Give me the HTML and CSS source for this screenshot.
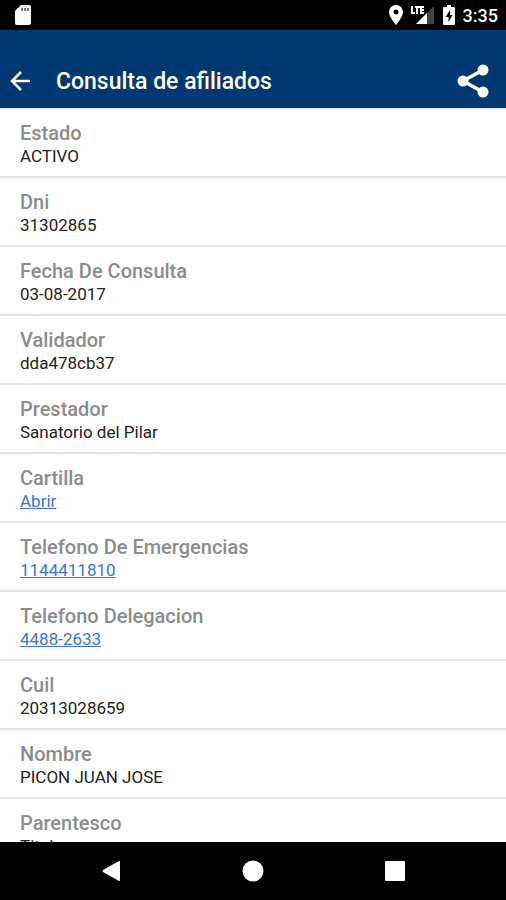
FILE: index.html
```html
<!DOCTYPE html>
<html lang="es">
<head>
    <meta charset="UTF-8">
    <meta name="viewport" content="width=device-width, initial-scale=1.0">
    <title>Consulta de afiliados</title>

    <link rel="stylesheet" href="styles.css">
</head>
<body>
    <div class="estado-bar">
        <svg width="16" height="20" viewBox="0 0 16 20">
            <path fill="#fff" d="M6 0h8q2 0 2 2v16q0 2-2 2H2q-2 0-2-2V6z"/>
            <path stroke="#777" stroke-width="2" d="M7 3v3M10 3v3M13 3v3"/>
        </svg>
        <div class="estado-iconos">
            <svg width="14" height="20" viewBox="0 0 14 20">
                <path fill="#fff" fill-rule="evenodd" d="M7 0a7 7 0 0 0-7 7c0 5 7 13 7 13s7-8 7-13a7 7 0 0 0-7-7zm0 4.500a2.500 2.500 0 1 1 0 5 2.500 2.500 0 0 1 0-5z"/>
            </svg>
            <svg width="24" height="20" viewBox="0 0 24 20">
                <path fill="#444" d="M23 1v18H5z"/>
                <path fill="#fff" d="M16 8v11H5z"/>
                <path fill="#000" d="M0 0h14v10H0z"/>
                <path fill="none" stroke="#fff" stroke-width="2" d="M1 1v7h3M4 2h5M6 2v7M13 2H10v6H13M10 5H13"/>
            </svg>
            <svg width="12" height="20" viewBox="0 0 12 20">
                <path fill="#fff" d="M4 0h4v2h3q1 0 1 1v16q0 1-1 1H1q-1 0-1-1V3q0-1 1-1h3z"/>
                <path fill="#000" d="M7 5 2.500 12H5.500v5L9.500 10H7z"/>
            </svg>
            <span class="hora">3:35</span>
        </div>
    </div>

    <header class="cabecera">
        <button class="boton" aria-label="Volver">
            <svg width="20" height="20" viewBox="0 0 20 20">
                <path fill="none" stroke="#fff" stroke-width="2.500" d="M20 10H2M11 1 2 10l9 9"/>
            </svg>
        </button>
        <h1>Consulta de afiliados</h1>
        <button class="boton" aria-label="Compartir">
            <svg width="32" height="34" viewBox="0 0 32 34">
                <path fill="none" stroke="#fff" stroke-width="3.500" d="M26 6 6 17l20 11"/>
                <g fill="#fff">
                    <circle cx="26" cy="6" r="5.500"/>
                    <circle cx="6" cy="17" r="5.500"/>
                    <circle cx="26" cy="28" r="5.500"/>
                </g>
            </svg>
        </button>
    </header>

    <main class="contenido">
        <dl class="lista">
            <div class="fila">
                <dt>Estado</dt>
                <dd>ACTIVO</dd>
            </div>
            <div class="fila">
                <dt>Dni</dt>
                <dd>31302865</dd>
            </div>
            <div class="fila">
                <dt>Fecha De Consulta</dt>
                <dd>03-08-2017</dd>
            </div>
            <div class="fila">
                <dt>Validador</dt>
                <dd>dda478cb37</dd>
            </div>
            <div class="fila">
                <dt>Prestador</dt>
                <dd>Sanatorio del Pilar</dd>
            </div>
            <div class="fila">
                <dt>Cartilla</dt>
                <dd><a href="#">Abrir</a></dd>
            </div>
            <div class="fila">
                <dt>Telefono De Emergencias</dt>
                <dd><a href="tel:1144411810">1144411810</a></dd>
            </div>
            <div class="fila">
                <dt>Telefono Delegacion</dt>
                <dd><a href="tel:44882633">4488-2633</a></dd>
            </div>
            <div class="fila">
                <dt>Cuil</dt>
                <dd>20313028659</dd>
            </div>
            <div class="fila">
                <dt>Nombre</dt>
                <dd>PICON JUAN JOSE</dd>
            </div>
            <div class="fila">
                <dt>Parentesco</dt>
                <dd>Titular</dd>
            </div>
        </dl>
    </main>

    <nav class="navegacion">
        <button class="boton" aria-label="Atrás">
            <svg width="20" height="22" viewBox="0 0 20 22">
                <path fill="#fff" d="M18 1q1-.5 1 1v18q0 1.500-1 1L2 12q-1-1 0-2z"/>
            </svg>
        </button>
        <button class="boton" aria-label="Inicio">
            <svg width="22" height="22" viewBox="0 0 22 22">
                <circle cx="11" cy="11" r="10.500" fill="#fff"/>
            </svg>
        </button>
        <button class="boton" aria-label="Recientes">
            <svg width="20" height="20" viewBox="0 0 20 20">
                <rect width="20" height="20" rx="1" fill="#fff"/>
            </svg>
        </button>
    </nav>
</body>
</html>
```
FILE: styles.css
```css
*
{
    box-sizing: border-box;
}
body
{
    display: flex;
    flex-direction: column;
    height: 100vh;
    margin: 0;
    background-color: #fff;
    font-family: Roboto, sans-serif;
}
svg
{
    display: block;
}
.boton
{
    padding: 0;
    border: none;
    background: none;
    cursor: pointer;
}

.estado-bar
{
    display: flex;
    flex-shrink: 0;
    justify-content: space-between;
    align-items: center;
    height: 30px;
    padding: 0 8px 0 15px;
    background-color: #000;
}
.estado-iconos
{
    display: flex;
    align-items: center;
    gap: 8px;
}
.hora
{
    color: #fff;
    font-size: 18px;
    font-weight: 500;
}

.cabecera
{
    display: flex;
    flex-shrink: 0;
    align-items: center;
    height: 78px;
    padding: 24px 17px 0 10px;
    background-color: #003872;
}
.cabecera h1
{
    flex: 1;
    margin: 0 0 0 26px;
    color: #fff;
    font-size: 23px;
    font-weight: 500;
}

.contenido
{
    flex: 1;
    min-height: 0;
    overflow: hidden;
    border-top: 1px solid #e0e0e0;
}
.lista
{
    margin: 0;
}
.fila
{
    padding: 12px 20px 8px;
    border-bottom: 2px solid #e4e4e4;
}
.fila dt
{
    color: #8c8c8c;
    font-size: 20px;
    font-weight: 500;
    line-height: 24px;
}
.fila dd
{
    margin: 0;
    color: #222;
    font-size: 17px;
    line-height: 23px;
}
.fila a
{
    color: #3973e6;
}

.navegacion
{
    display: grid;
    grid-template-columns: repeat(3, 1fr);
    flex-shrink: 0;
    justify-items: center;
    align-items: center;
    height: 58px;
    padding: 0 40px;
    background-color: #000;
}
```
